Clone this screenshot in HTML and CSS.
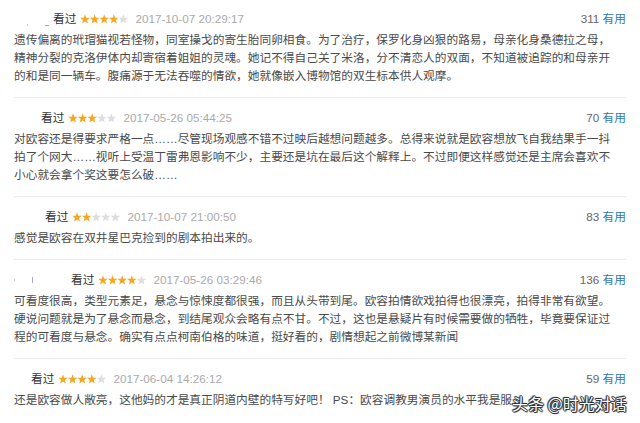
FILE: index.html
```html
<!DOCTYPE html>
<html lang="zh">
<head>
<meta charset="utf-8">
<title>短评</title>
<link rel="stylesheet" href="styles.css">
</head>
<body>
<svg width="0" height="0" class="defs" aria-hidden="true">
  <defs>
    <polygon id="star" points="5,0.3 6.2,3.7 9.8,3.8 7,6 8,9.6 5,7.5 2,9.6 3,6 0.2,3.8 3.8,3.7"/>
  </defs>
</svg>
<div class="list">
  <div class="item">
    <div class="head">
      <span class="user" style="width:39px"><i class="mark m1"></i><i class="mark m2"></i></span>
      <span class="seen">看过</span>
      <svg class="stars" width="48" height="10" viewBox="0 0 48 10"><use href="#star" x="0" class="on"/><use href="#star" x="9.6" class="on"/><use href="#star" x="19.2" class="on"/><use href="#star" x="28.8" class="on"/><use href="#star" x="38.4" class="off"/></svg>
      <span class="date">2017-10-07 20:29:17</span>
      <span class="votes"><span class="num">311</span> <a class="useful">有用</a></span>
    </div>
    <p class="text">遗传偏离的玳瑁猫视若怪物，同室操戈的寄生胎同卵相食。为了治疗，保罗化身凶狠的路易，母亲化身桑德拉之母，<br>精神分裂的克洛伊体内却寄宿着姐姐的灵魂。她记不得自己关了米洛，分不清恋人的双面，不知道被追踪的和母亲开<br>的和是同一辆车。腹痛源于无法吞噬的情欲，她就像嵌入博物馆的双生标本供人观摩。</p>
  </div>
  <div class="item">
    <div class="head">
      <span class="user" style="width:27px"></span>
      <span class="seen">看过</span>
      <svg class="stars" width="48" height="10" viewBox="0 0 48 10"><use href="#star" x="0" class="on"/><use href="#star" x="9.6" class="on"/><use href="#star" x="19.2" class="on"/><use href="#star" x="28.8" class="off"/><use href="#star" x="38.4" class="off"/></svg>
      <span class="date">2017-05-26 05:44:25</span>
      <span class="votes"><span class="num">70</span> <a class="useful">有用</a></span>
    </div>
    <p class="text">对欧容还是得要求严格一点……尽管现场观感不错不过映后越想问题越多。总得来说就是欧容想放飞自我结果手一抖<br>拍了个网大……视听上受温丁雷弗恩影响不少，主要还是坑在最后这个解释上。不过即便这样感觉还是主席会喜欢不<br>小心就会拿个奖这要怎么破……</p>
  </div>
  <div class="item">
    <div class="head">
      <span class="user" style="width:31px"></span>
      <span class="seen">看过</span>
      <svg class="stars" width="48" height="10" viewBox="0 0 48 10"><use href="#star" x="0" class="on"/><use href="#star" x="9.6" class="on"/><use href="#star" x="19.2" class="off"/><use href="#star" x="28.8" class="off"/><use href="#star" x="38.4" class="off"/></svg>
      <span class="date">2017-10-07 21:00:50</span>
      <span class="votes"><span class="num">83</span> <a class="useful">有用</a></span>
    </div>
    <p class="text">感觉是欧容在双井星巴克捡到的剧本拍出来的。</p>
  </div>
  <div class="item">
    <div class="head">
      <span class="user" style="width:57px"><i class="mark m3"></i><i class="mark m4"></i></span>
      <span class="seen">看过</span>
      <svg class="stars" width="48" height="10" viewBox="0 0 48 10"><use href="#star" x="0" class="on"/><use href="#star" x="9.6" class="on"/><use href="#star" x="19.2" class="on"/><use href="#star" x="28.8" class="on"/><use href="#star" x="38.4" class="off"/></svg>
      <span class="date">2017-05-26 03:29:46</span>
      <span class="votes"><span class="num">136</span> <a class="useful">有用</a></span>
    </div>
    <p class="text">可看度很高，类型元素足，悬念与惊悚度都很强，而且从头带到尾。欧容拍情欲戏拍得也很漂亮，拍得非常有欲望。<br>硬说问题就是为了悬念而悬念，到结尾观众会略有点不甘。不过，这也是悬疑片有时候需要做的牺牲，毕竟要保证过<br>程的可看度与悬念。确实有点点柯南伯格的味道，挺好看的，剧情想起之前微博某新闻</p>
  </div>
  <div class="item">
    <div class="head">
      <span class="user" style="width:17px"></span>
      <span class="seen">看过</span>
      <svg class="stars" width="48" height="10" viewBox="0 0 48 10"><use href="#star" x="0" class="on"/><use href="#star" x="9.6" class="on"/><use href="#star" x="19.2" class="on"/><use href="#star" x="28.8" class="on"/><use href="#star" x="38.4" class="off"/></svg>
      <span class="date">2017-06-04 14:26:12</span>
      <span class="votes"><span class="num">59</span> <a class="useful">有用</a></span>
    </div>
    <p class="text">还是欧容做人敞亮，这他妈的才是真正阴道内壁的特写好吧！ PS：欧容调教男演员的水平我是服</p>
  </div>
</div>
<div class="watermark">头条 @时光对话</div>
</body>
</html>
```

FILE: styles.css
```css
html, body {
  margin: 0;
  padding: 0;
  background: #fff;
}
body {
  width: 640px;
  height: 423px;
  overflow: hidden;
  position: relative;
  font-family: "Liberation Sans", "Noto Sans CJK SC", sans-serif;
  font-size: 11.7px;
  color: #4a4a4a;
}
.defs {
  position: absolute;
}
.list {
  margin: 0 14px;
}
.item {
  padding: 11px 0 12px;
  border-bottom: 1px solid #ebebeb;
}
.item:first-child {
  padding-top: 10px;
}
.item:last-child {
  border-bottom: none;
}
.head {
  display: flex;
  align-items: center;
  height: 18px;
  line-height: 18px;
}
.user {
  display: inline-flex;
  align-items: flex-end;
  height: 14px;
  position: relative;
}
.mark {
  display: block;
  background: #c8c8c8;
}
.m1 { width: 1px; height: 2px; margin-left: 13px; }
.m2 { width: 4px; height: 1px; margin-left: 17px; background: #9ab; }
.m3 { width: 1px; height: 2px; margin-left: 0; align-self: center; }
.m4 { width: 1px; height: 6px; margin-left: 17px; align-self: center; background: #aac; }
.seen {
  color: #333;
}
.stars {
  margin-left: 4px;
  display: block;
}
.stars .on { fill: #f5a623; }
.stars .off { fill: #dedede; }
.date {
  margin-left: 7px;
  color: #aaa;
}
.votes {
  margin-left: auto;
}
.num {
  color: #666;
}
.useful {
  color: #3377aa;
}
.text {
  margin: 3px 0 0;
  line-height: 18px;
  white-space: nowrap;
}
.watermark {
  position: absolute;
  left: 512px;
  top: 393px;
  font-family: "Noto Sans CJK SC", sans-serif;
  font-size: 16px;
  line-height: 20px;
  color: #fff;
  white-space: nowrap;
  text-shadow: 1px 0 0 #333, -1px 0 0 #333, 0 1px 0 #333, 0 -1px 0 #333, 1px 1px 1px #333, -1px -1px 1px #333;
}
```
